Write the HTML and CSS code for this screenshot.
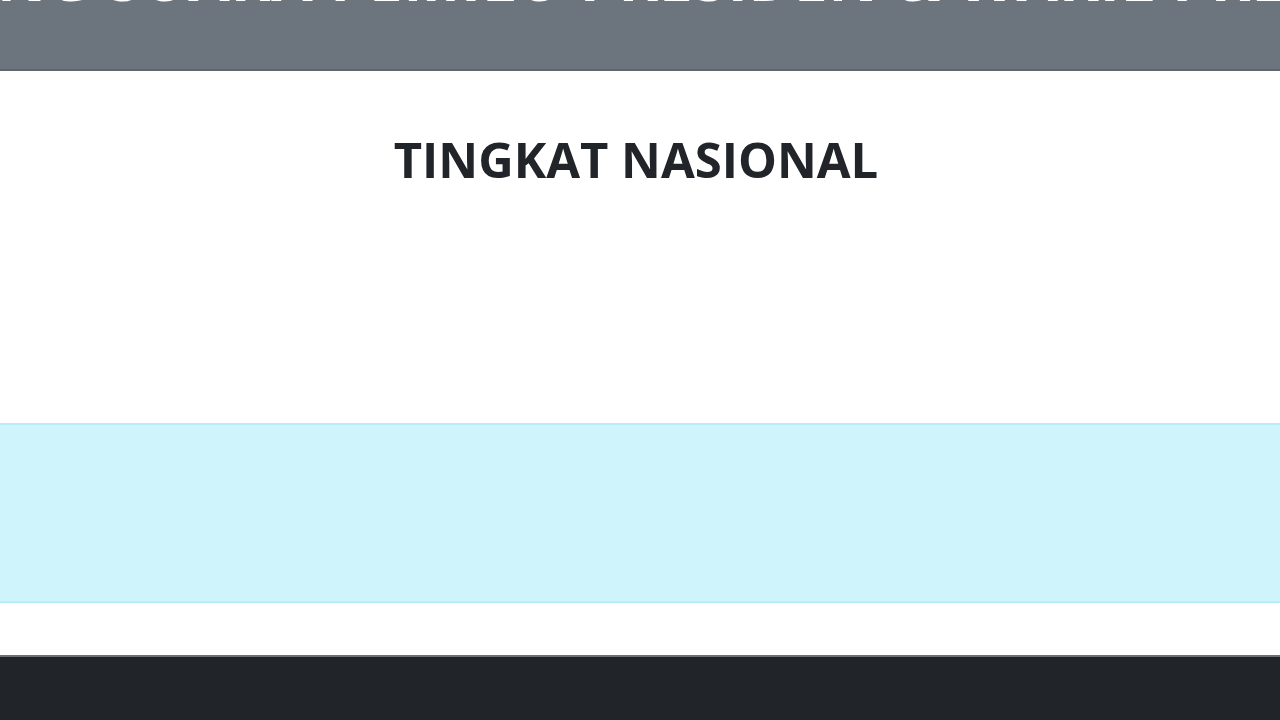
FILE: index.html
```html
<!DOCTYPE html>
<html lang="id">
<head>
    <meta charset="UTF-8">
    <meta name="viewport" content="width=device-width, initial-scale=1.0">
    <title>Rekapitulasi Suara - Tingkat Nasional</title>
    <link rel="stylesheet" href="styles.css">
</head>
<body>
    <header class="page-header">
        <h1>HASIL HITUNG SUARA PEMILU PRESIDEN &amp; WAKIL PRESIDEN 2024</h1>
    </header>

    <main class="content">
        <h2 class="level-title">TINGKAT NASIONAL</h2>
        <div class="alert-info"></div>
    </main>

    <footer class="page-footer"></footer>
</body>
</html>
```

FILE: styles.css
```css
* { margin: 0; padding: 0; box-sizing: border-box; }
html, body { height: 100%; }
body { font-family: "Open Sans", "Noto Sans", sans-serif; background: #fff; color: #212529; overflow: hidden; display: flex; flex-direction: column; }

.page-header { background: #6c757d; border-bottom: 2px solid #5f676e; margin-top: -60px; height: 131px; padding-top: 6px; display: flex; justify-content: center; white-space: nowrap; }
.page-header h1 { color: #fff; font-size: 60px; font-weight: 700; line-height: 64px; letter-spacing: 1px; }

.content { padding-top: 56px; }
.level-title { text-align: center; font-size: 49px; font-weight: 700; line-height: 64px; margin-right: 8px; }

.alert-info { background: #cff4fc; border-top: 2px solid #b6effb; border-bottom: 2px solid #b6effb; height: 180px; margin: 0 -20px; margin-top: 232px; }

.page-footer { background: #212529; border-top: 2px solid #6c6f73; margin-top: 52px; flex: 1; }
```
